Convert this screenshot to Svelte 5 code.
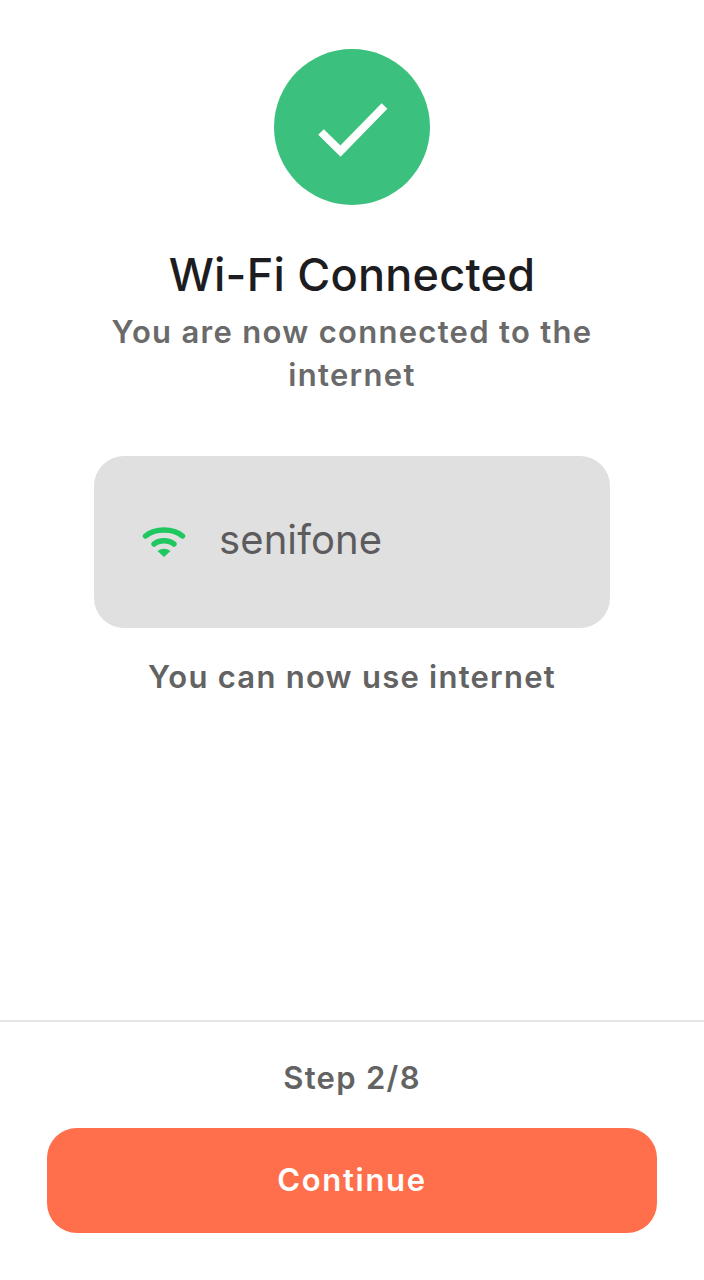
<script>
  const ssid = 'senifone';
</script>

<div class="page">
  <main class="content">
    <div class="badge">
      <svg viewBox="0 0 156 156" width="156" height="156" aria-hidden="true">
        <path d="M47 83 L66.500 102 L110.500 57" fill="none" stroke="#fff" stroke-width="8" />
      </svg>
    </div>
    <h1>Wi-Fi Connected</h1>
    <p class="sub">You are now connected to the internet</p>
    <div class="network">
      <svg class="wifi" viewBox="0 0 44 32" width="44" height="32" aria-hidden="true">
        <path d="M3.500 10 C13 2 31 2 40.500 10" fill="none" stroke="#1fc75f" stroke-width="5.500" stroke-linecap="round" />
        <path d="M12 18 C17 13.500 27 13.500 32 18" fill="none" stroke="#1fc75f" stroke-width="5.500" stroke-linecap="round" />
        <path d="M15.500 25 Q22 20.500 28.500 25 L22 31 Z" fill="#1fc75f" />
      </svg>
      <span class="ssid">{ssid}</span>
    </div>
    <p class="note">You can now use internet</p>
  </main>
  <footer>
    <div class="step">Step 2/8</div>
    <button type="button">Continue</button>
  </footer>
</div>

<style>
  :global(body) {
    margin: 0;
    background: #fff;
  }
  .page {
    width: 704px;
    height: 1280px;
    display: flex;
    flex-direction: column;
    font-family: Inter, "Noto Sans", sans-serif;
    overflow: hidden;
  }
  .content {
    flex: 1;
    display: flex;
    flex-direction: column;
    align-items: center;
    padding-top: 49px;
  }
  .badge {
    width: 156px;
    height: 156px;
    border-radius: 50%;
    background: #3bc17d;
  }
  .badge svg {
    display: block;
  }
  h1 {
    margin: 40px 0 0;
    font-size: 45px;
    line-height: 60px;
    font-weight: 500;
    letter-spacing: 0.25px;
    color: #1d1d21;
  }
  .sub {
    margin: 5px 0 0;
    width: 520px;
    text-align: center;
    font-size: 31px;
    line-height: 43px;
    font-weight: 600;
    letter-spacing: 1.3px;
    color: #6a6a6a;
  }
  .network {
    margin-top: 60px;
    width: 516px;
    height: 172px;
    box-sizing: border-box;
    padding-left: 48px;
    display: flex;
    align-items: center;
    gap: 33px;
    border-radius: 30px;
    background: #e0e0e0;
  }
  .wifi {
    flex: none;
  }
  .ssid {
    font-family: Inter, Roboto, sans-serif;
    font-size: 40px;
    line-height: 48px;
    margin-top: -4px;
    letter-spacing: 0.1px;
    color: #5c5c5e;
  }
  .note {
    margin: 27px 0 0;
    font-size: 31px;
    line-height: 44px;
    font-weight: 600;
    letter-spacing: 1.25px;
    color: #636363;
  }
  footer {
    height: 260px;
    box-sizing: border-box;
    border-top: 2px solid #e6e6e6;
    display: flex;
    flex-direction: column;
    align-items: center;
    padding: 34px 47px 0;
  }
  .step {
    font-size: 31px;
    line-height: 44px;
    font-weight: 600;
    letter-spacing: 1.3px;
    color: #636363;
  }
  button {
    margin-top: 28px;
    width: 100%;
    height: 105px;
    padding: 0 0 3px;
    border: 0;
    border-radius: 30px;
    background: #ff6f4c;
    color: #fff;
    font: inherit;
    font-size: 31px;
    font-weight: 600;
    letter-spacing: 1.7px;
  }
</style>
